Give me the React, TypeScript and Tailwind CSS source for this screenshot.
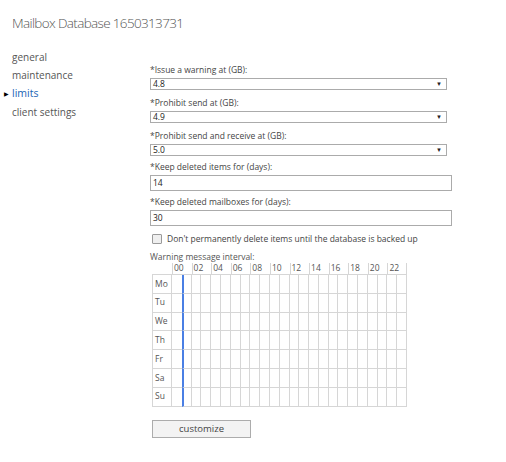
import React from 'react';

const hours = ['00', '02', '04', '06', '08', '10', '12', '14', '16', '18', '20', '22'];
const days = ['Mo', 'Tu', 'We', 'Th', 'Fr', 'Sa', 'Su'];
const navItems = ['general', 'maintenance', 'limits', 'client settings'];

const font = { fontFamily: '"Open Sans", "Noto Sans", sans-serif' };

const Select = ({ label, value }: { label: string; value: string }) => (
  <div className="flex flex-col">
    <div className="h-[12px] text-[8.5px] leading-[12px] text-[#444]">{label}</div>
    <div className="mt-[2px] flex h-[12px] w-[297px] items-center justify-between border border-[#ababab] bg-white pl-[2px] pr-[4px]">
      <span className="text-[8.5px] leading-none text-[#222]">{value}</span>
      <span className="text-[6px] leading-none text-[#222]">▼</span>
    </div>
  </div>
);

const TextField = ({ label, value }: { label: string; value: string }) => (
  <div className="flex flex-col">
    <div className="h-[12px] text-[8.5px] leading-[12px] text-[#444]">{label}</div>
    <div className="mt-[2px] flex h-[16px] w-[302px] items-center border border-[#ababab] bg-white pl-[2px]">
      <span className="text-[8.5px] leading-none text-[#222]">{value}</span>
    </div>
  </div>
);

// hour cell borders: column 1 carries the blue marker on its left edge
const hourCell = (i: number) => {
  if (i === 0) return 'h-[18.8px] border-b border-[#d6d6d6]';
  if (i === 1) return 'h-[18.8px] border-b border-r border-l-2 border-[#d6d6d6] border-l-[#4a7fe4]';
  return 'h-[18.8px] border-b border-r border-[#d6d6d6]';
};

const Schedule = () => (
  <div className="ml-[2px] w-[255px]">
    <div className="grid h-[11px] grid-cols-[20px_repeat(12,minmax(0,1fr))]">
      <div />
      {hours.map((h, i) => (
        <div
          key={h}
          className={`border-l border-[#d6d6d6] pl-[1px] text-[8.5px] leading-[10px] text-[#555] ${i === hours.length - 1 ? 'border-r' : ''}`}
        >
          {h}
        </div>
      ))}
    </div>
    <div className="grid grid-cols-[20px_repeat(24,minmax(0,1fr))] border-t border-[#d6d6d6]">
      {days.map((d) => (
        <React.Fragment key={d}>
          <div className="flex h-[18.8px] items-center border-b border-l border-r border-[#d6d6d6] pl-[2px] text-[8.5px] text-[#555]">
            {d}
          </div>
          {Array.from({ length: 24 }).map((_, i) => (
            <div key={i} className={hourCell(i)} />
          ))}
        </React.Fragment>
      ))}
    </div>
  </div>
);

const App: React.FC = () => {
  return (
    <div className="h-[462px] w-[506px] overflow-hidden bg-white" style={font}>
      <h1 className="pl-[12px] pt-[14px] text-[13.5px] font-light leading-[19px] tracking-[-0.65px] text-[#555]">
        Mailbox Database 1650313731
      </h1>

      <div className="flex">
        <nav className="w-[150px] pt-[15px]">
          {navItems.map((item) => (
            <div key={item} className="relative flex h-[18.5px] items-center pl-[12px] text-[10px]">
              {item === 'limits' && (
                <span className="absolute left-[4px] text-[6px] text-black">▶</span>
              )}
              <span className={item === 'limits' ? 'text-[10.5px] text-[#1a64b4]' : 'text-[#555]'}>{item}</span>
            </div>
          ))}
        </nav>

        <main className="flex flex-col pt-[31px]">
          <Select label="*Issue a warning at (GB):" value="4.8" />
          <div className="mt-[7px]">
            <Select label="*Prohibit send at (GB):" value="4.9" />
          </div>
          <div className="mt-[7px]">
            <Select label="*Prohibit send and receive at (GB):" value="5.0" />
          </div>
          <div className="mt-[5px]">
            <TextField label="*Keep deleted items for (days):" value="14" />
          </div>
          <div className="mt-[5px]">
            <TextField label="*Keep deleted mailboxes for (days):" value="30" />
          </div>

          <label className="ml-[2px] mt-[7px] flex h-[12px] items-center gap-[5px] text-[8.5px] text-[#444]">
            <span className="h-[10px] w-[10px] rounded-[1px] border border-[#9a9a9a] bg-[#efefef]" />
            Don't permanently delete items until the database is backed up
          </label>

          <div className="mt-[6px] h-[12px] text-[8.5px] leading-[12px] text-[#555]">Warning message interval:</div>

          <Schedule />

          <button className="ml-[2px] mt-[13px] h-[18px] w-[99px] border border-[#acacac] bg-[#f3f3f3] text-[9.5px] leading-none text-[#444]">
            customize
          </button>
        </main>
      </div>
    </div>
  );
};

export default App;
